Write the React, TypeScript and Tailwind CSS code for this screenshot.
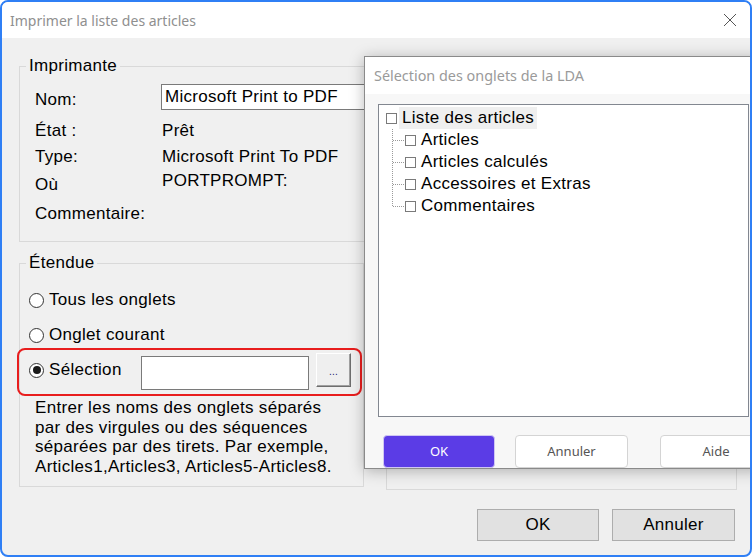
import type { ReactNode } from 'react';

function Radio({ checked }: { checked?: boolean }) {
    return (
        <span className="flex h-[15px] w-[15px] shrink-0 items-center justify-center rounded-full border border-[#333] bg-white">
            {checked && <span className="h-[8px] w-[8px] rounded-full bg-[#1a1a1a]" />}
        </span>
    );
}

function InfoRow({ label, value, className, labelClass }: { label: string; value?: string; className: string; labelClass?: string }) {
    return (
        <div className={`flex h-[22px] items-start ${className}`}>
            <span className={`w-[126px] shrink-0 leading-[22px] ${labelClass ?? ''}`}>{label}</span>
            {value && <span className="ml-[1px] leading-[22px]">{value}</span>}
        </div>
    );
}

function Box() {
    return <span className="h-[11px] w-[11px] shrink-0 border border-[#7a7a7a] bg-white" />;
}

function TreeChild({ children, last }: { children: ReactNode; last?: boolean }) {
    return (
        <div className="flex h-[22px] items-center">
            <svg width="13" height="22" className="shrink-0">
                <line x1="0.5" y1="0" x2="0.5" y2={last ? 11 : 22} stroke="#9a9a9a" strokeDasharray="1 1" />
                <line x1="1" y1="11.5" x2="12" y2="11.5" stroke="#9a9a9a" strokeDasharray="1 1" />
            </svg>
            <Box />
            <span className="ml-[5px] leading-[22px]">{children}</span>
        </div>
    );
}

export default function App() {
    return (
        <div className="relative h-[557px] w-[752px] overflow-hidden rounded-[8px] border-2 border-[#2f7ff5] bg-[#f0f0f0] font-['Liberation_Sans',Arial,sans-serif] text-[17px] tracking-[0.3px] text-black">
            {/* title bar */}
            <div className="flex h-[36px] items-center justify-between bg-white pl-[8px] pr-[14px]">
                <span className="font-['Noto_Sans',sans-serif] text-[14px] tracking-normal text-[#8f8f8f]">Imprimer la liste des articles</span>
                <svg width="12" height="12" viewBox="0 0 12 12">
                    <path d="M0 0L12 12M12 0L0 12" stroke="#555" strokeWidth="1" />
                </svg>
            </div>

            <div className="flex flex-col pl-[17px] pr-[13px]">
                <fieldset className="mt-[19px] border border-[#d9d9d9]">
                    <legend className="ml-[6px] px-[3px] leading-[18px]">Imprimante</legend>
                    <div className="flex flex-col pl-[15px] pt-[9px] pb-[16px]">
                        <div className="flex h-[26px] items-start">
                            <span className="mt-[5px] w-[126px] shrink-0 leading-[22px]">Nom:</span>
                            <div className="flex h-[26px] w-[420px] items-center border border-[#7a7a7a] bg-white pl-[3px]">Microsoft Print to PDF</div>
                        </div>
                        <InfoRow className="mt-[10px]" label="État :" value="Prêt" />
                        <InfoRow className="mt-[4px]" label="Type:" value="Microsoft Print To PDF" />
                        <InfoRow className="mt-[2px]" labelClass="mt-[4px]" label="Où" value="PORTPROMPT:" />
                        <InfoRow className="mt-[11px]" label="Commentaire:" />
                    </div>
                </fieldset>

                <div className="mt-[12px] flex items-start gap-[22px]">
                    <fieldset className="w-[345px] shrink-0 border border-[#d9d9d9]">
                        <legend className="ml-[6px] px-[3px] leading-[18px]">Étendue</legend>
                        <div className="flex flex-col pl-[9px] pt-[17px] pb-[10px]">
                            <label className="flex h-[22px] items-center gap-[5px]">
                                <Radio />
                                <span>Tous les onglets</span>
                            </label>
                            <label className="mt-[13px] flex h-[22px] items-center gap-[5px]">
                                <Radio />
                                <span>Onglet courant</span>
                            </label>
                            <div className="relative mt-[7px] flex h-[37px] items-start">
                                <div className="pointer-events-none absolute -top-[5px] -bottom-[6px] -left-[12px] right-[1px] rounded-[8px] border-2 border-[#e81d1d]" />
                                <label className="mt-[6px] flex h-[22px] w-[112px] shrink-0 items-center gap-[5px]">
                                    <Radio checked />
                                    <span>Sélection</span>
                                </label>
                                <div className="mt-[3px] h-[34px] w-[168px] border border-[#7a7a7a] bg-white" />
                                <button className="ml-[7px] flex h-[34px] w-[35px] items-end justify-center border border-t-white border-l-white border-r-[#6e6e6e] border-b-[#6e6e6e] bg-[#efefef] pb-[9px] text-[10px] leading-none text-[#1c1c6c] shadow-[inset_-1px_-1px_0_#a0a0a0]">
                                    ...
                                </button>
                            </div>
                            <p className="mt-[8px] pl-[6px] leading-[19.5px]">
                                Entrer les noms des onglets séparés
                                <br />
                                par des virgules ou des séquences
                                <br />
                                séparées par des tirets. Par exemple,
                                <br />
                                Articles1,Articles3, Articles5-Articles8.
                            </p>
                        </div>
                    </fieldset>
                    <fieldset className="h-[236px] flex-1 border border-[#d9d9d9]" />
                </div>

                <div className="mt-[19px] flex justify-end gap-[13px] pr-[2px]">
                    <button className="h-[32px] w-[122px] border border-[#adadad] bg-[#e1e1e1]">OK</button>
                    <button className="h-[32px] w-[123px] border border-[#adadad] bg-[#e1e1e1]">Annuler</button>
                </div>
            </div>

            {/* tab picker window */}
            <div className="absolute top-[54px] left-[362px] flex h-[413px] w-[399px] flex-col border border-[#8a8a8a] bg-[#f7f7f7] shadow-[0_2px_14px_rgba(0,0,0,0.28)]">
                <div className="flex h-[37px] shrink-0 items-center bg-white pl-[9px] font-['Noto_Sans',sans-serif] text-[14.4px] tracking-normal text-[#9a9a9a]">
                    Sélection des onglets de la LDA
                </div>
                <div className="mx-[13px] mt-[10px] h-[313px] shrink-0 border border-[#828790] bg-white pt-[2px] pl-[7px]">
                    <div className="flex h-[22px] items-center">
                        <Box />
                        <span className="ml-[2px] flex h-[22px] items-center bg-[#efefef] px-[3px]">Liste des articles</span>
                    </div>
                    <div className="ml-[6px] flex flex-col">
                        <TreeChild>Articles</TreeChild>
                        <TreeChild>Articles calculés</TreeChild>
                        <TreeChild>Accessoires et Extras</TreeChild>
                        <TreeChild last>Commentaires</TreeChild>
                    </div>
                </div>
                <div className="mt-[18px] flex pl-[18px] font-['Noto_Sans',sans-serif] text-[13px] tracking-normal">
                    <button className="h-[33px] w-[112px] shrink-0 rounded-[4px] border border-[#cfc6f3] bg-[#5b3ce6] text-white">OK</button>
                    <button className="ml-[20px] h-[33px] w-[113px] shrink-0 rounded-[4px] border border-[#d4d4d4] bg-white text-[#555]">Annuler</button>
                    <button className="ml-[32px] h-[33px] w-[112px] shrink-0 rounded-[4px] border border-[#d4d4d4] bg-white text-[#555]">Aide</button>
                </div>
            </div>
        </div>
    );
}
